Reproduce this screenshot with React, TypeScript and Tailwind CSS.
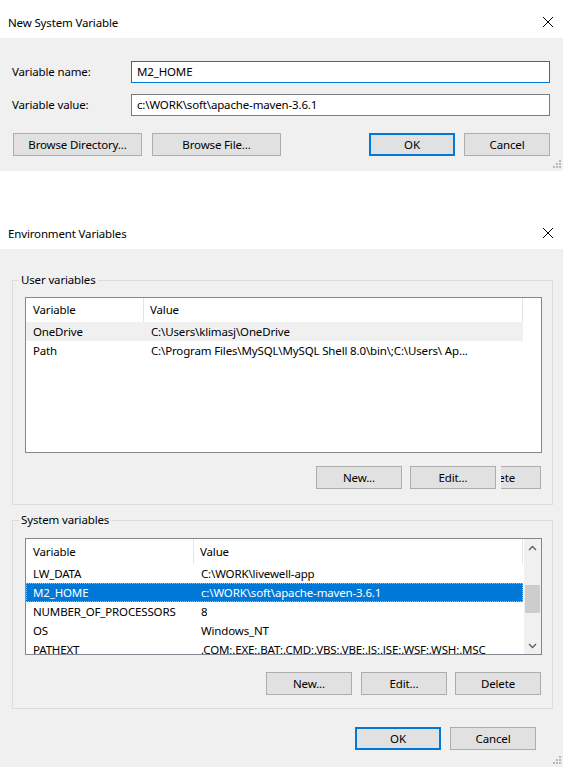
import React from "react";

const font = "font-['Segoe_UI','Noto_Sans',sans-serif]";

const CloseIcon = () => (
  <svg width="12" height="12" viewBox="0 0 12 12" className="block">
    <path d="M1 1 L11 11 M11 1 L1 11" stroke="#000" strokeWidth="1" fill="none" />
  </svg>
);

const Grip = () => (
  <svg width="9" height="9" viewBox="0 0 9 9" className="absolute right-[1px] bottom-[2px]">
    <rect x="6" y="0" width="2" height="2" fill="#b9b9b9" />
    <rect x="3" y="3" width="2" height="2" fill="#b9b9b9" />
    <rect x="6" y="3" width="2" height="2" fill="#b9b9b9" />
    <rect x="0" y="6" width="2" height="2" fill="#b9b9b9" />
    <rect x="3" y="6" width="2" height="2" fill="#b9b9b9" />
    <rect x="6" y="6" width="2" height="2" fill="#b9b9b9" />
  </svg>
);

type BtnProps = { label: string; primary?: boolean; className?: string };

const Btn: React.FC<BtnProps> = ({ label, primary, className = "" }) => (
  <div
    className={`h-[23px] w-[86px] flex items-center justify-center bg-[#e1e1e1] leading-[16px] ${
      primary ? "border-2 border-[#0078d7]" : "border border-[#adadad]"
    } ${className}`}
  >
    {label}
  </div>
);

type Row = { name: string; value: string };

const Header: React.FC<{ col: number; h: string }> = ({ col, h }) => (
  <div className={`flex ${h} w-[497px] bg-white`}>
    <div className="flex items-center pl-[7px] border-r border-[#e5e5e5]" style={{ width: col }}>
      Variable
    </div>
    <div className="flex-1 flex items-center pl-[6px] border-r border-[#e5e5e5]">Value</div>
  </div>
);

const ListRow: React.FC<{ row: Row; col: number; state?: "hover" | "selected" }> = ({ row, col, state }) => (
  <div
    className={`flex h-[19px] w-[497px] items-center whitespace-nowrap ${
      state === "selected"
        ? "bg-[#0078d7] text-white outline-1 outline-dotted outline-[#f4a85a] -outline-offset-1"
        : state === "hover"
          ? "bg-[#f0f0f0]"
          : ""
    }`}
  >
    <div className="pl-[7px] shrink-0" style={{ width: col }}>
      {row.name}
    </div>
    <div className="pl-[7px] overflow-hidden">{row.value}</div>
  </div>
);

const GroupBox: React.FC<{ title: string; className?: string; children: React.ReactNode }> = ({
  title,
  className = "",
  children,
}) => (
  <div className={`relative border border-[#dcdcdc] ${className}`}>
    <div className="absolute top-[-9px] left-[6px] bg-[#f0f0f0] px-[2px] leading-[16px]">{title}</div>
    {children}
  </div>
);

const systemRows: Row[] = [
  { name: "LW_DATA", value: "C:\\WORK\\livewell-app" },
  { name: "M2_HOME", value: "c:\\WORK\\soft\\apache-maven-3.6.1" },
  { name: "NUMBER_OF_PROCESSORS", value: "8" },
  { name: "OS", value: "Windows_NT" },
  { name: "PATHEXT", value: ".COM;.EXE;.BAT;.CMD;.VBS;.VBE;.JS;.JSE;.WSF;.WSH;.MSC" },
];

export default function App() {
  return (
    <div className={`w-[569px] h-[767px] bg-white overflow-hidden text-[11.5px] tracking-[-0.15px] text-black ${font}`}>
      {/* New System Variable dialog */}
      <div className="w-[563px]">
        <div className="h-[38px] flex justify-between pl-2 pr-[9px] pt-[15px] leading-[16px]">
          <span>New System Variable</span>
          <span className="pt-[1px]">
            <CloseIcon />
          </span>
        </div>
        <div className="relative h-[133px] bg-[#f0f0f0] pl-3 pr-[13px] pt-[23px]">
          <div className="flex items-center">
            <div className="w-[119px]">Variable name:</div>
            <div className="h-[22px] flex-1 border border-[#0078d7] bg-white pl-[5px] flex items-center">M2_HOME</div>
          </div>
          <div className="flex items-center mt-[11px]">
            <div className="w-[119px]">Variable value:</div>
            <div className="h-[22px] flex-1 border border-[#7a7a7a] bg-white pl-[5px] flex items-center">
              c:\WORK\soft\apache-maven-3.6.1
            </div>
          </div>
          <div className="flex mt-[17px]">
            <Btn label="Browse Directory..." className="ml-[1px] w-[129px]" />
            <Btn label="Browse File..." className="ml-[10px] w-[129px]" />
            <Btn label="OK" primary className="ml-auto" />
            <Btn label="Cancel" className="ml-[9px]" />
          </div>
          <Grip />
        </div>
      </div>

      {/* Environment Variables dialog */}
      <div className="w-[563px]">
        <div className="h-[78px] flex justify-between pl-2 pr-[9px] pt-[55px] leading-[16px]">
          <span>Environment Variables</span>
          <span className="pt-[1px]">
            <CloseIcon />
          </span>
        </div>
        <div className="relative h-[518px] bg-[#f0f0f0] pl-3 pr-[10px] pt-[31px]">
          <GroupBox title="User variables" className="h-[225px]">
            <div className="ml-[12px] mt-[16px] w-[517px] h-[156px] border border-[#828790] bg-white">
              <Header col={118} h="h-[24px]" />
              <ListRow row={{ name: "OneDrive", value: "C:\\Users\\klimasj\\OneDrive" }} col={118} state="hover" />
              <ListRow
                row={{ name: "Path", value: "C:\\Program Files\\MySQL\\MySQL Shell 8.0\\bin\\;C:\\Users\\ Ap..." }}
                col={118}
              />
            </div>
            <div className="flex mt-[13px] pl-[303px]">
              <Btn label="New..." />
              <Btn label="Edit..." className="ml-[8px]" />
              <div className="ml-[5px] w-[40px] overflow-hidden flex justify-end">
                <Btn label="Delete" className="shrink-0" />
              </div>
            </div>
          </GroupBox>

          <GroupBox title="System variables" className="h-[189px] mt-[15px]">
            <div className="ml-[12px] mt-[17px] w-[517px] h-[117px] border border-[#828790] bg-white flex overflow-hidden">
              <div className="w-[497px]">
                <Header col={168} h="h-[25px]" />
                {systemRows.map((r, i) => (
                  <ListRow key={r.name} row={r} col={168} state={i === 1 ? "selected" : undefined} />
                ))}
              </div>
              <div className="w-[18px] pl-[1px] bg-white">
                <div className="h-full bg-[#f0f0f0] flex flex-col">
                  <div className="h-[17px] flex items-center justify-center">
                    <svg width="9" height="6" viewBox="0 0 9 6">
                      <path d="M1 5 L4.5 1.5 L8 5" stroke="#606060" strokeWidth="1.4" fill="none" />
                    </svg>
                  </div>
                  <div className="mt-[29px] h-[28px] mx-[1px] bg-[#cdcdcd]" />
                  <div className="mt-auto h-[17px] flex items-center justify-center">
                    <svg width="9" height="6" viewBox="0 0 9 6">
                      <path d="M1 1 L4.5 4.5 L8 1" stroke="#606060" strokeWidth="1.4" fill="none" />
                    </svg>
                  </div>
                </div>
              </div>
            </div>
            <div className="flex justify-end mt-[17px] pr-[11px]">
              <Btn label="New..." />
              <Btn label="Edit..." className="ml-[9px]" />
              <Btn label="Delete" className="ml-[8px]" />
            </div>
          </GroupBox>

          <div className="flex justify-end mt-[18px] pr-[17px]">
            <Btn label="OK" primary />
            <Btn label="Cancel" className="ml-[9px]" />
          </div>
          <Grip />
        </div>
      </div>
    </div>
  );
}
